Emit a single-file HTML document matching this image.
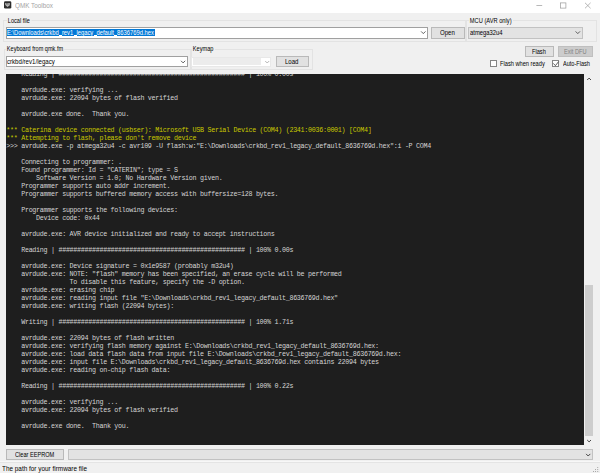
<!DOCTYPE html>
<html><head><meta charset="utf-8">
<style>
*{margin:0;padding:0;box-sizing:border-box}
html,body{width:600px;height:473px;overflow:hidden;background:#f0f0f0;font-family:"Liberation Sans",sans-serif;color:#000}
.a{position:absolute}
.t{position:absolute;white-space:pre;font-size:5.5px;line-height:8px;color:#000}
#title{left:0;top:0;width:600px;height:13.2px;background:#fff}
.grp{position:absolute;border:1px solid #e3e3e3}
.lbl{position:absolute;background:#f0f0f0;white-space:pre;font-size:5.5px;line-height:8px;color:#000;padding:0 1.5px 0 1px}
.tb{position:absolute;background:#fff;border:1px solid #a0a0a0}
.btn{position:absolute;background:#e1e1e1;border:1px solid #b9b9b9}
.cmb{position:absolute;background:#e3e3e3;border:1px solid #c2c2c2}
svg{position:absolute;overflow:visible}
#con{left:6px;top:73.5px;width:578.3px;height:371.5px;background:#1e1e1e;overflow:hidden}
#con pre{position:absolute;left:0.3px;top:-4px;font-family:"Liberation Mono",monospace;font-size:6.7px;letter-spacing:-0.288px;line-height:8px;color:#d4d4d4}
.y{color:#c8c800}
</style></head><body>
<div id="title" class="a"></div>
<!-- icon -->
<svg style="left:0;top:0" width="16" height="12" viewBox="0 0 16 12">
<rect x="4" y="1.3" width="7.3" height="7.2" rx="1.3" fill="#2d2d2d"/>
<path d="M5.2 2.9 H9.8 V5.2 L7.5 6.9 L5.2 5.0 Z" fill="#b3b3b3"/>
<rect x="6.0" y="3.2" width="0.9" height="1.2" fill="#5a5a5a"/>
<rect x="7.2" y="3.2" width="0.9" height="1.2" fill="#5a5a5a"/>
<rect x="8.3" y="2.9" width="0.35" height="2" fill="#6a6a6a"/>
</svg>
<div class="t" style="left:14.7px;top:1.75px;font-size:6.5px;color:#a4a4a4;transform:scaleX(.975);transform-origin:0 0;">QMK Toolbox</div>
<svg style="left:0;top:0" width="600" height="13" viewBox="0 0 600 13">
<path d="M536.4 5.5 H542.2" stroke="#999" stroke-width="0.7"/>
<rect x="560.4" y="2.9" width="5.5" height="5.2" fill="none" stroke="#999" stroke-width="0.7"/>
<path d="M585 2.8 L590.6 8.3 M590.6 2.8 L585 8.3" stroke="#999" stroke-width="0.7"/>
</svg>

<!-- Local file group -->
<div class="grp" style="left:2.6px;top:20px;width:463.9px;height:21.5px"></div>
<div class="lbl" style="left:6.7px;top:16.82px;font-size:6.6px;transform:scaleX(0.845);transform-origin:0 0;">Local file</div>
<div class="tb" style="left:6px;top:27px;width:422px;height:11.6px"></div>
<div class="a" style="left:7px;top:29px;width:148px;height:7px;background:#0078d7"></div>
<div class="a" style="left:59.15px;top:35.1px;width:3.04px;height:0.9px;background:#fff"></div><div class="a" style="left:73.68px;top:35.1px;width:3.05px;height:0.9px;background:#fff"></div><div class="a" style="left:93.71px;top:35.1px;width:3.04px;height:0.9px;background:#fff"></div><div class="a" style="left:114.37px;top:35.1px;width:3.05px;height:0.9px;background:#fff"></div>
<div class="t" style="left:7.3px;top:28.82px;font-size:6.6px;color:#fff;transform:scaleX(0.881);transform-origin:0 0;">E:\Downloads\crkbd_rev1_legacy_default_8636769d.hex</div>

<div class="btn" style="left:431.3px;top:27px;width:33.4px;height:11.7px"></div>
<div class="t" style="left:439.7px;top:29.32px;font-size:6.6px;transform:scaleX(0.915);transform-origin:0 0;">Open</div>

<!-- MCU group -->
<div class="grp" style="left:466px;top:20px;width:131px;height:21.8px"></div>
<div class="lbl" style="left:468.6px;top:16.82px;font-size:6.6px;transform:scaleX(0.864);transform-origin:0 0;">MCU (AVR only)</div>
<div class="cmb" style="left:468px;top:27px;width:114.5px;height:11.7px"></div>
<div class="t" style="left:469.8px;top:29.32px;font-size:6.6px;transform:scaleX(0.887);transform-origin:0 0;">atmega32u4</div>

<!-- Keyboard group -->
<div class="grp" style="left:4px;top:48.7px;width:186.5px;height:21px"></div>
<div class="lbl" style="left:6.4px;top:45.12px;font-size:6.6px;transform:scaleX(0.843);transform-origin:0 0;">Keyboard from qmk.fm</div>
<div class="tb" style="left:6px;top:56.2px;width:182px;height:11px"></div>
<div class="t" style="left:6.8px;top:58.32px;font-size:6.6px;transform:scaleX(0.924);transform-origin:0 0;">crkbd/rev1/legacy</div>

<!-- Keymap group -->
<div class="grp" style="left:191px;top:48.7px;width:121.5px;height:21px"></div>
<div class="lbl" style="left:192.1px;top:45.32px;font-size:6.6px;transform:scaleX(0.850);transform-origin:0 0;">Keymap</div>
<div class="a" style="left:191.3px;top:56.5px;width:80px;height:10px;background:#fff;border:1px solid #e8e8e8"></div>
<div class="a" style="left:192.8px;top:57.8px;width:67.9px;height:7.4px;background:#ececec"></div>
<div class="btn" style="left:275.8px;top:56px;width:33px;height:11.1px"></div>
<div class="t" style="left:284.7px;top:58.32px;font-size:6.6px;transform:scaleX(0.920);transform-origin:0 0;">Load</div>

<!-- Flash buttons -->
<div class="btn" style="left:525px;top:46px;width:29px;height:10.8px"></div>
<div class="t" style="left:532.1px;top:48.32px;font-size:6.6px;transform:scaleX(0.855);transform-origin:0 0;">Flash</div>
<div class="btn" style="left:558px;top:46px;width:35px;height:10.8px;background:#cccccc;border-color:#bfbfbf"></div>
<div class="t" style="left:564px;top:48.32px;font-size:6.6px;color:#838383;transform:scaleX(0.856);transform-origin:0 0;">Exit DFU</div>
<div class="a" style="left:490px;top:60px;width:7.2px;height:7.3px;background:#fff;border:0.9px solid #858585"></div>
<div class="t" style="left:500.1px;top:60.32px;font-size:6.6px;transform:scaleX(0.860);transform-origin:0 0;">Flash when ready</div>
<div class="a" style="left:552px;top:60px;width:7.2px;height:7.3px;background:#fff;border:0.9px solid #858585"></div>
<svg style="left:0;top:0" width="600" height="80" viewBox="0 0 600 80">
<path d="M553.4 63.4 L555.4 65.7 L558.6 61.6" fill="none" stroke="#444" stroke-width="0.85"/>
</svg>
<div class="t" style="left:562.5px;top:60.32px;font-size:6.6px;transform:scaleX(0.846);transform-origin:0 0;">Auto-Flash</div>

<!-- console -->
<div id="con" class="a"><pre>    Reading | ################################################## | 100% 0.00s

    avrdude.exe: verifying ...
    avrdude.exe: 22094 bytes of flash verified

    avrdude.exe done.  Thank you.

<span class="y">*** Caterina device connected (usbser): Microsoft USB Serial Device (COM4) (2341:0036:0001) [COM4]
*** Attempting to flash, please don't remove device</span>
&gt;&gt;&gt; avrdude.exe -p atmega32u4 -c avr109 -U flash:w:"E:\Downloads\crkbd_rev1_legacy_default_8636769d.hex":i -P COM4

    Connecting to programmer: .
    Found programmer: Id = "CATERIN"; type = S
        Software Version = 1.0; No Hardware Version given.
    Programmer supports auto addr increment.
    Programmer supports buffered memory access with buffersize=128 bytes.

    Programmer supports the following devices:
        Device code: 0x44

    avrdude.exe: AVR device initialized and ready to accept instructions

    Reading | ################################################## | 100% 0.00s

    avrdude.exe: Device signature = 0x1e9587 (probably m32u4)
    avrdude.exe: NOTE: "flash" memory has been specified, an erase cycle will be performed
                 To disable this feature, specify the -D option.
    avrdude.exe: erasing chip
    avrdude.exe: reading input file "E:\Downloads\crkbd_rev1_legacy_default_8636769d.hex"
    avrdude.exe: writing flash (22094 bytes):

    Writing | ################################################## | 100% 1.71s

    avrdude.exe: 22094 bytes of flash written
    avrdude.exe: verifying flash memory against E:\Downloads\crkbd_rev1_legacy_default_8636769d.hex:
    avrdude.exe: load data flash data from input file E:\Downloads\crkbd_rev1_legacy_default_8636769d.hex:
    avrdude.exe: input file E:\Downloads\crkbd_rev1_legacy_default_8636769d.hex contains 22094 bytes
    avrdude.exe: reading on-chip flash data:

    Reading | ################################################## | 100% 0.22s

    avrdude.exe: verifying ...
    avrdude.exe: 22094 bytes of flash verified

    avrdude.exe done.  Thank you.
</pre></div>
<!-- scrollbar -->
<div class="a" style="left:585.3px;top:284.7px;width:7.3px;height:151.5px;background:#cdcdcd"></div>


<!-- bottom -->
<div class="a" style="left:0;top:461px;width:600px;height:1px;background:#f7f7f7"></div>
<div class="a" style="left:0;top:462px;width:600px;height:1px;background:#e4e4e4"></div>
<div class="btn" style="left:6.3px;top:449.3px;width:57.5px;height:10.5px"></div>
<div class="t" style="left:14.7px;top:450.7px;font-size:6.6px;transform:scaleX(0.850);transform-origin:0 0;">Clear EEPROM</div>
<div class="cmb" style="left:68px;top:449.3px;width:524.8px;height:11.2px"></div>
<div class="t" style="left:1.7px;top:464.6px;font-size:6.9px;transform:scaleX(0.928);transform-origin:0 0;">The path for your firmware file</div>
<svg style="left:0;top:0" width="600" height="80" viewBox="0 0 600 80">
<path d="M421.1 31.4 L423.3 33.6 L425.5 31.4" fill="none" stroke="#3a3a3a" stroke-width="0.8"/>
<path d="M575.6 31.4 L577.8 33.6 L580 31.4" fill="none" stroke="#3a3a3a" stroke-width="0.8"/>
<path d="M181 60.8 L183.1 62.9 L185.2 60.8" fill="none" stroke="#3a3a3a" stroke-width="0.8"/>
<path d="M265.2 61 L267.2 63 L269.2 61" fill="none" stroke="#9a9a9a" stroke-width="0.7"/>
</svg>
<svg style="left:0;top:0" width="600" height="473" viewBox="0 0 600 473">
<path d="M587.2 80 L589.1 78.1 L591 80" fill="none" stroke="#333" stroke-width="0.9"/>
<path d="M587.2 440 L589.1 441.9 L591 440" fill="none" stroke="#333" stroke-width="0.9"/>
<path d="M586.1 453.9 L588.2 456 L590.3 453.9" fill="none" stroke="#333" stroke-width="0.9"/>
<g fill="#a8a8a8"><rect x="597.2" y="467" width="1" height="1"/><rect x="597.2" y="469" width="1" height="1"/><rect x="597.2" y="471" width="1" height="1"/><rect x="595" y="469" width="1" height="1"/><rect x="595" y="471" width="1" height="1"/><rect x="593" y="471" width="1" height="1"/></g>
</svg>
</body></html>
